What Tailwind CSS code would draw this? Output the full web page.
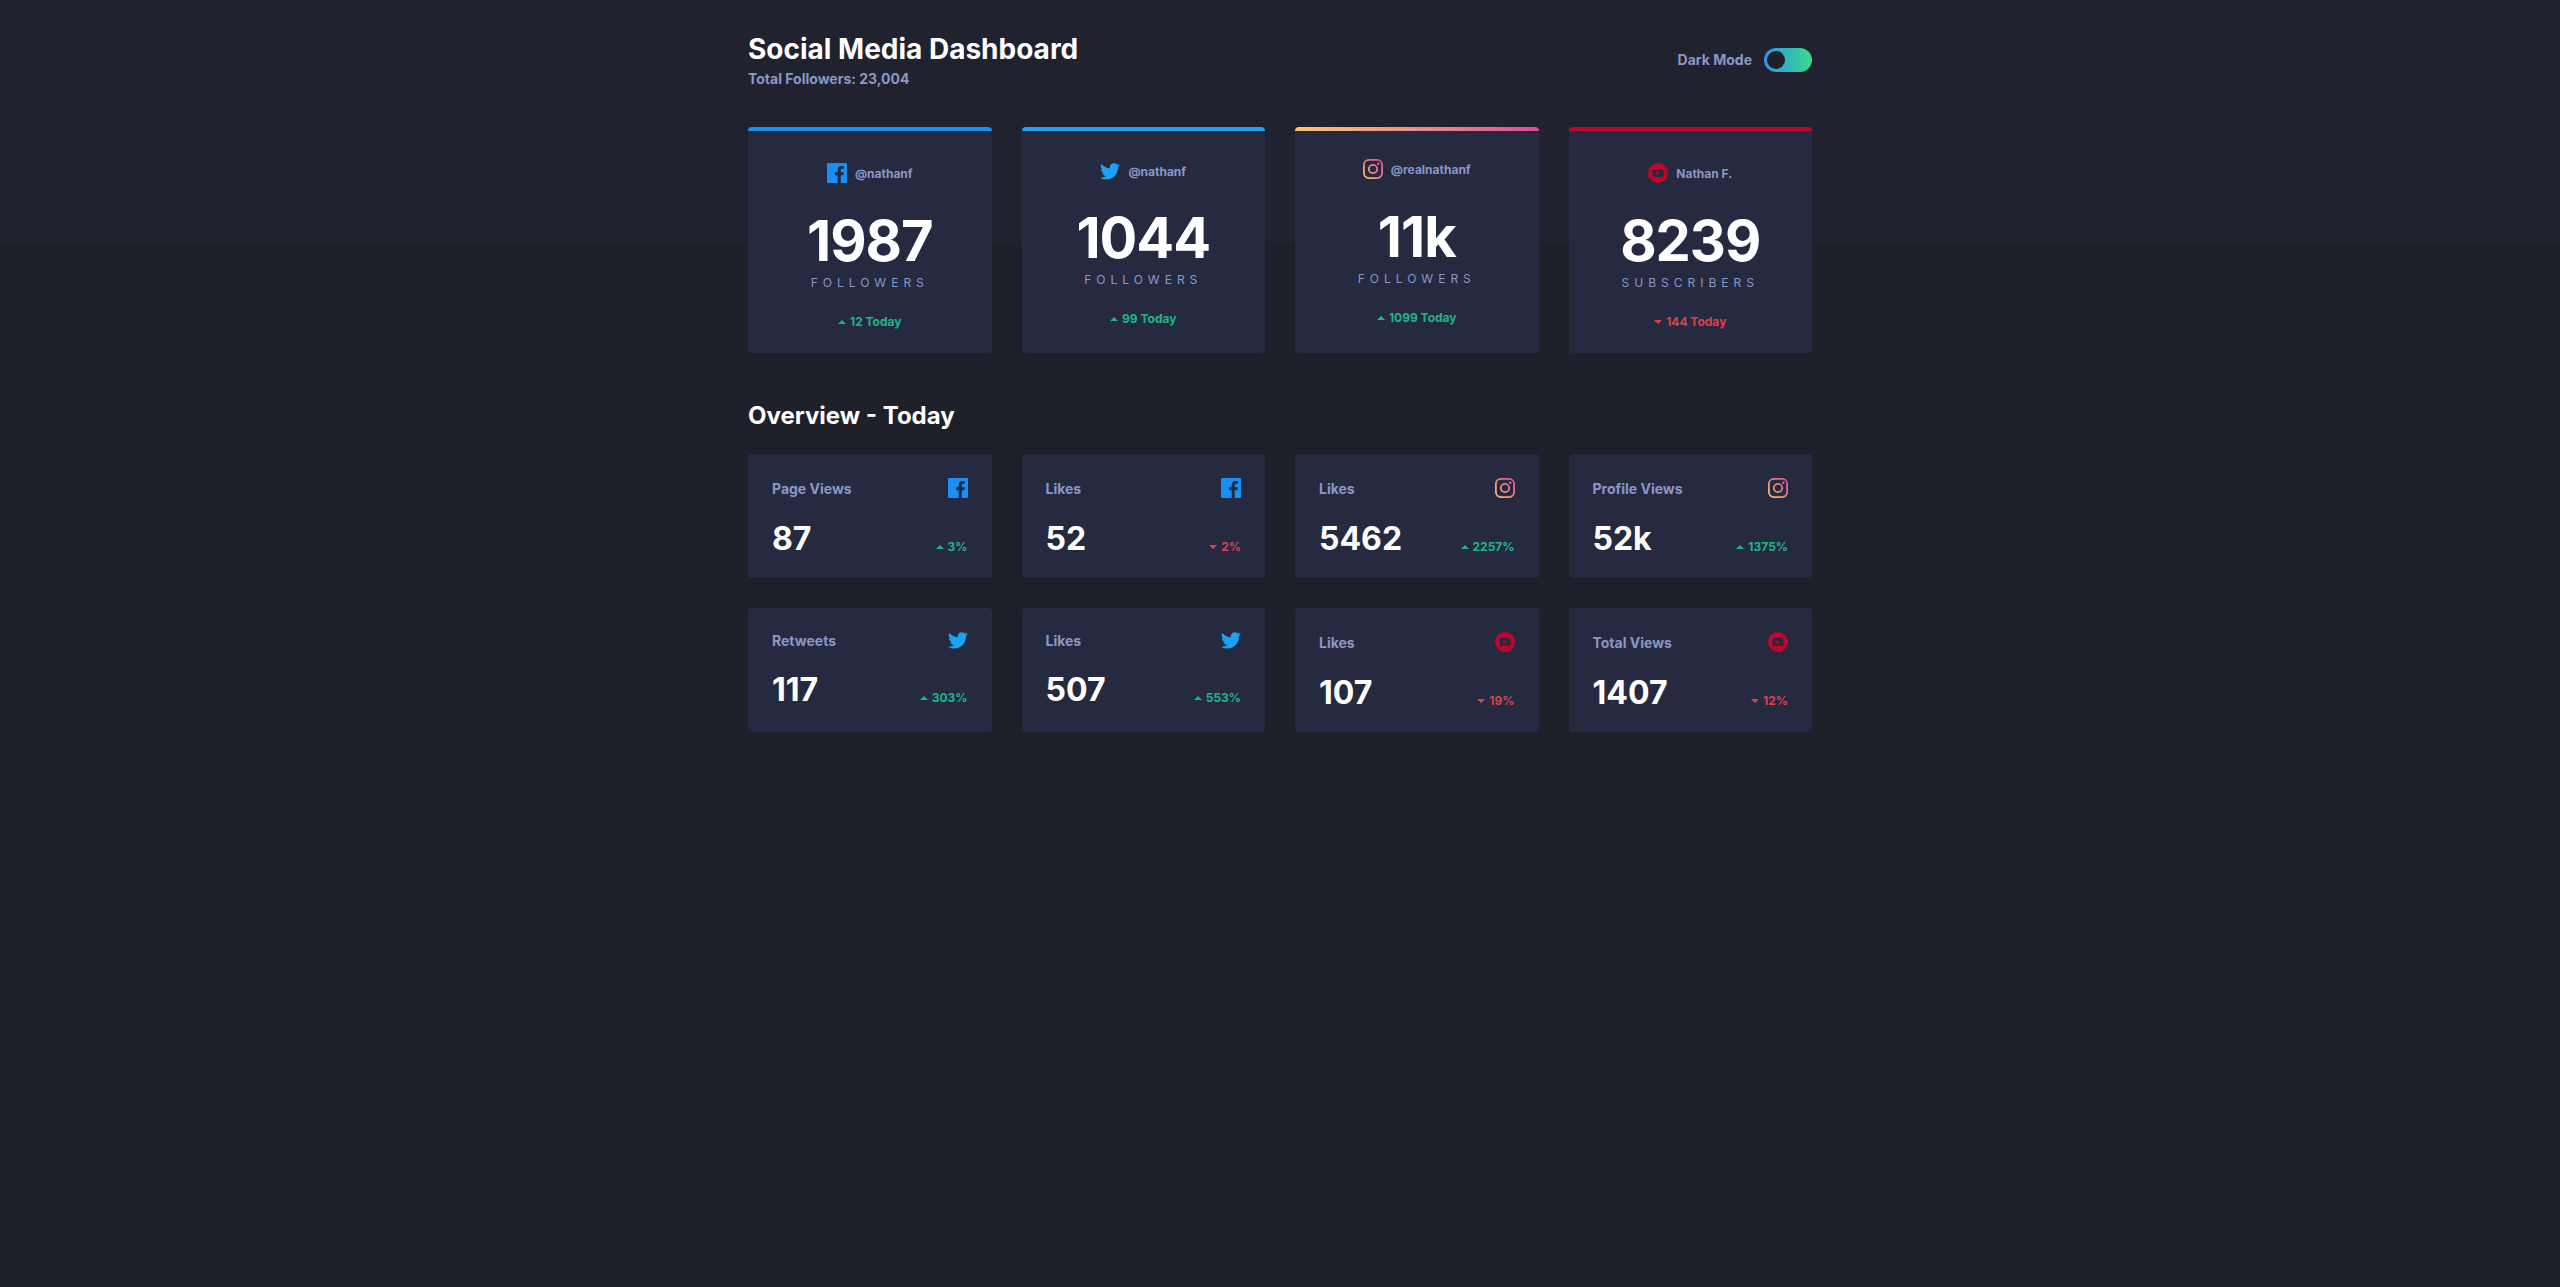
<!DOCTYPE html>
<html lang="en">
<head>
<meta charset="utf-8">
<meta name="viewport" content="width=device-width, initial-scale=1">
<title>Social Media Dashboard</title>
<script src="https://cdn.jsdelivr.net/npm/@tailwindcss/browser@4"></script>
</head>
<body class="min-h-screen bg-[#1e2129] bg-linear-to-b from-[#20222f] from-[244px] to-[#1e2129] to-[244px] font-['Inter',sans-serif] font-bold text-[#8b97c6]">

<svg class="absolute size-0" aria-hidden="true">
  <defs>
    <linearGradient id="ig" gradientUnits="userSpaceOnUse" x1="0" x2="20" y1="20" y2="0">
      <stop offset="0%" stop-color="#FDC468"/>
      <stop offset="100%" stop-color="#DF4996"/>
    </linearGradient>
    <symbol id="facebook" viewBox="0 0 20 20"><path fill="#178FF5" d="M18.896 0H1.104C.494 0 0 .494 0 1.104v17.793C0 19.506.494 20 1.104 20h9.58v-7.745H8.076V9.237h2.606V7.01c0-2.583 1.578-3.99 3.883-3.99 1.104 0 2.052.082 2.329.119v2.7h-1.598c-1.254 0-1.496.597-1.496 1.47v1.928h2.989l-.39 3.018h-2.6V20h5.098c.608 0 1.102-.494 1.102-1.104V1.104C20 .494 19.506 0 18.896 0z"/></symbol>
    <symbol id="twitter" viewBox="0 0 20 17"><path fill="#1DA1F2" d="M20 2.172a8.192 8.192 0 01-2.357.646 4.11 4.11 0 001.805-2.27 8.22 8.22 0 01-2.606.996A4.096 4.096 0 0013.847.248c-2.65 0-4.596 2.472-3.998 5.037A11.648 11.648 0 011.392 1 4.109 4.109 0 002.663 6.477 4.086 4.086 0 01.8 5.964c-.045 1.9 1.318 3.679 3.291 4.075a4.113 4.113 0 01-1.853.07 4.106 4.106 0 003.833 2.849A8.25 8.25 0 010 14.658a11.616 11.616 0 006.29 1.843c7.618 0 11.922-6.434 11.662-12.205A8.354 8.354 0 0020 2.172z"/></symbol>
    <symbol id="youtube" viewBox="0 0 20 20"><path fill="#C4032A" fill-rule="evenodd" d="M10 0a10 10 0 100 20 10 10 0 000-20zM6.2 6.1Q10 5.7 13.8 6.1Q15.3 6.3 15.5 7.8Q15.8 10 15.5 12.2Q15.3 13.7 13.8 13.9Q10 14.3 6.2 13.9Q4.7 13.7 4.5 12.2Q4.2 10 4.5 7.8Q4.7 6.3 6.2 6.1zM8.3 8.1v3.8l3.7-1.9z"/></symbol>
  </defs>
</svg>

<main class="mx-auto max-w-[1064px] pt-8 pb-8">
  <header class="flex items-center justify-between">
    <div>
      <h1 class="text-[28px] leading-[34px] text-white">Social Media Dashboard</h1>
      <p class="mt-1 text-sm leading-[17px]">Total Followers: 23,004</p>
    </div>
    <label class="flex items-center gap-3 text-sm">
      Dark Mode
      <span class="relative flex h-6 w-12">
        <input type="checkbox" class="h-6 w-12 appearance-none rounded-full bg-linear-to-r from-[#378fe6] to-[#3eda82]">
        <span class="pointer-events-none absolute top-[3px] left-[3px] size-[18px] rounded-full bg-[#1e2129]"></span>
      </span>
    </label>
  </header>

  <section id="totals" class="mt-10 grid grid-cols-4 gap-[30px]"></section>
  <h2 class="mt-12 text-2xl leading-[29px] text-white">Overview - Today</h2>
  <section id="overview" class="mt-6 grid grid-cols-4 gap-[30px]"></section>
</main>

<script>
const instagram = `<svg class="size-5 shrink-0" viewBox="0 0 20 20" fill="none" stroke="url(#ig)" role="img" aria-label="instagram"><rect x=".9" y=".9" width="18.2" height="18.2" rx="5" stroke-width="1.8"/><circle cx="10" cy="10" r="4.2" stroke-width="1.8"/><circle cx="15.3" cy="4.7" r="1.2" fill="url(#ig)" stroke="none"/></svg>`;
const icon = n => n === 'instagram' ? instagram
  : `<svg class="${n === 'twitter' ? 'h-[17px]' : 'h-5'} w-5 shrink-0" role="img" aria-label="${n}"><use href="#${n}"/></svg>`;
const change = (up, text) => `<p class="flex items-center gap-1 text-xs leading-[15px] ${up ? 'text-[#1eb589]' : 'text-[#dc414c]'}"><svg class="h-1 w-2" viewBox="0 0 8 4" fill="currentColor" aria-hidden="true"><path d="${up ? 'M0 4l4-4 4 4z' : 'M0 0l4 4 4-4z'}"/></svg>${text}</p>`;
const bars = {
  facebook: 'border-t-4 border-[#178ff5]',
  twitter: 'border-t-4 border-[#1da1f2]',
  instagram: 'before:absolute before:inset-x-0 before:top-0 before:h-1 before:bg-linear-to-r before:from-[#fdc468] before:to-[#df4996]',
  youtube: 'border-t-4 border-[#c4032a]',
};
document.getElementById('totals').innerHTML = [
  ['facebook', '@nathanf', '1987', 'Followers', 1, '12 Today'],
  ['twitter', '@nathanf', '1044', 'Followers', 1, '99 Today'],
  ['instagram', '@realnathanf', '11k', 'Followers', 1, '1099 Today'],
  ['youtube', 'Nathan F.', '8239', 'Subscribers', 0, '144 Today'],
].map(([n, user, total, unit, up, text]) => `
  <article class="relative flex flex-col items-center overflow-hidden rounded bg-[#252a41] pt-8 pb-6 ${bars[n]}">
    <div class="flex items-center gap-2 text-xs leading-[15px]">${icon(n)}<span>${user}</span></div>
    <p class="mt-[30px] text-[56px] leading-[56px] tracking-[-1px] text-white">${total}</p>
    <p class="mt-[6px] mb-6 text-xs leading-[15px] font-normal tracking-[5px] uppercase">${unit}</p>
    ${change(up, text)}
  </article>`).join('');
document.getElementById('overview').innerHTML = [
  ['facebook', 'Page Views', '87', 1, '3%'],
  ['facebook', 'Likes', '52', 0, '2%'],
  ['instagram', 'Likes', '5462', 1, '2257%'],
  ['instagram', 'Profile Views', '52k', 1, '1375%'],
  ['twitter', 'Retweets', '117', 1, '303%'],
  ['twitter', 'Likes', '507', 1, '553%'],
  ['youtube', 'Likes', '107', 0, '19%'],
  ['youtube', 'Total Views', '1407', 0, '12%'],
].map(([n, label, value, up, text]) => `
  <article class="rounded bg-[#252a41] px-6 pt-6 pb-5">
    <div class="flex items-center justify-between text-sm leading-[17px]"><h3>${label}</h3>${icon(n)}</div>
    <div class="mt-[21px] flex items-end justify-between"><p class="text-[32px] leading-[39px] text-white">${value}</p><div class="pb-1">${change(up, text)}</div></div>
  </article>`).join('');
</script>
</body>
</html>
